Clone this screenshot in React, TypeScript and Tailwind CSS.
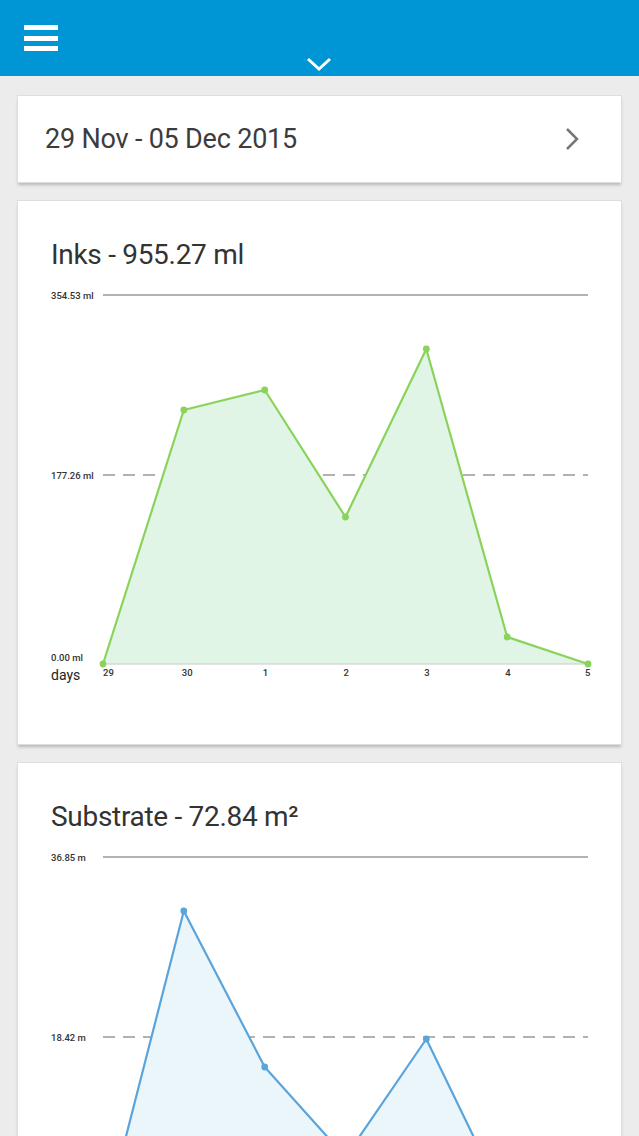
import React from "react";

type ChartProps = {
  values: number[];
  top: string;
  mid: string;
  bottom?: string;
  stroke: string;
  fill: string;
};

const xs = [85, 165.8, 246.7, 327.5, 408.3, 489.2, 570];
const days = ["29", "30", "1", "2", "3", "4", "5"];

function LineChart({ values, top, mid, bottom, stroke, fill }: ChartProps) {
  const pts = values.map((y, i) => `${xs[i]},${y}`).join(" ");
  const area = `${xs[0]},392 ${pts} ${xs[6]},392`;
  return (
    <svg width="603" height="472" viewBox="0 0 603 472" className="block">
      <g style={{ fontFamily: "Roboto, 'Liberation Sans', sans-serif" }}>
        <text x="33" y="26.5" fontSize="9.5" fontWeight="500" fill="#333">
          {top}
        </text>
        <text x="33" y="206.5" fontSize="9.5" fontWeight="500" fill="#333">
          {mid}
        </text>
        {bottom && (
          <text x="33" y="389" fontSize="9.5" fontWeight="500" fill="#333">
            {bottom}
          </text>
        )}
      </g>
      <line x1="85" y1="23" x2="570" y2="23" stroke="#999" strokeWidth="1.5" />
      <line
        x1="85"
        y1="203"
        x2="570"
        y2="203"
        stroke="#999"
        strokeWidth="1.5"
        strokeDasharray="12 8"
      />
      <polygon points={area} fill={fill} />
      <line x1="85" y1="392" x2="570" y2="392" stroke="#c8c8c8" strokeWidth="1" />
      <polyline
        points={pts}
        fill="none"
        stroke={stroke}
        strokeWidth="2.2"
        strokeLinejoin="round"
      />
      {values.map((y, i) => (
        <circle key={i} cx={xs[i]} cy={y} r="3.4" fill={stroke} />
      ))}
      <g style={{ fontFamily: "Roboto, 'Liberation Sans', sans-serif" }}>
        <text x="33" y="408" fontSize="14" fill="#222">
          days
        </text>
        {days.map((d, i) => (
          <text
            key={d}
            x={i === 0 ? xs[i] : i === 6 ? xs[i] - 3 : xs[i] - 2}
            y="404"
            fontSize="9.5"
            fontWeight="500"
            fill="#333"
          >
            {d}
          </text>
        ))}
      </g>
    </svg>
  );
}

function Card({ children, className = "" }: { children: React.ReactNode; className?: string }) {
  return (
    <div
      className={`mx-[18px] bg-white shadow-[0_0_0_1px_#dedede,0_3px_3px_rgba(0,0,0,0.22)] ${className}`}
    >
      {children}
    </div>
  );
}

export default function App() {
  return (
    <div
      className="h-[1136px] overflow-hidden bg-[#ececec]"
      style={{ fontFamily: "Roboto, 'Liberation Sans', sans-serif" }}
    >
      <header className="relative h-[76px] bg-[#0096d6]">
        <div className="absolute left-[24px] top-[25px] flex w-[34px] flex-col gap-[5.5px]">
          <span className="h-[5px] bg-white" />
          <span className="h-[5px] bg-white" />
          <span className="h-[5px] bg-white" />
        </div>
        <svg
          className="absolute left-[306px] top-[56px]"
          width="26"
          height="16"
          viewBox="0 0 26 16"
        >
          <polyline points="2,3 13,13 24,3" fill="none" stroke="#fff" strokeWidth="3" />
        </svg>
      </header>

      <div className="flex flex-col gap-[19px] pt-[20px]">
        <Card className="flex h-[86px] items-center justify-between pl-[27px] pr-[42px]">
          <span className="text-[27px] tracking-[-0.2px] text-[#3c3c3c]">
            29 Nov - 05 Dec 2015
          </span>
          <svg width="14" height="24" viewBox="0 0 14 24">
            <polyline points="2,2 12,12 2,22" fill="none" stroke="#777" strokeWidth="2.5" />
          </svg>
        </Card>

        <Card>
          <h2 className="pl-[33px] pt-[37px] text-[28px] leading-[34px] tracking-[-0.3px] text-[#333]">
            Inks - 955.27 ml
          </h2>
          <LineChart
            values={[392, 138, 118, 245, 77, 365, 392]}
            top="354.53 ml"
            mid="177.26 ml"
            bottom="0.00 ml"
            stroke="#8ad35a"
            fill="#e1f5e6"
          />
        </Card>

        <Card>
          <h2 className="pl-[33px] pt-[37px] text-[28px] leading-[34px] tracking-[-0.3px] text-[#333]">
            Substrate - 72.84 m²
          </h2>
          <LineChart
            values={[392, 77, 233, 323, 205, 372, 392]}
            top="36.85 m"
            mid="18.42 m"
            bottom="0.00 m"
            stroke="#5aa4dc"
            fill="#ebf6fb"
          />
        </Card>
      </div>
    </div>
  );
}
